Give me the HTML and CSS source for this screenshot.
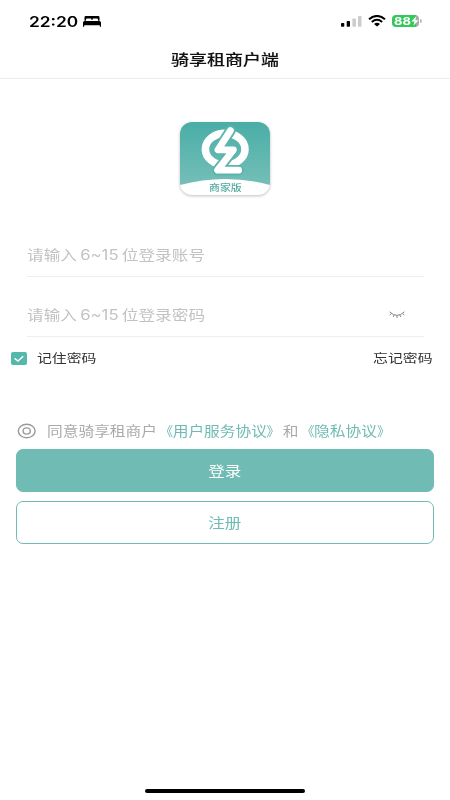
FILE: index.html
```html
<!DOCTYPE html>
<html lang="zh-CN">
<head>
<meta charset="utf-8">
<title>骑享租商户端</title>
<link rel="stylesheet" href="styles.css">
</head>
<body>
<div class="screen">
  <header class="status">
    <span class="wide time">22:20</span>
    <svg class="bed" width="18" height="11" viewBox="0 0 18 11"><path d="M1.5 4.7V1.2Q1.5 0 2.8 0H15.2Q16.5 0 16.5 1.2V4.7H15V3.4Q15 2.5 14 2.5H10.4Q9.5 2.5 9.5 3.4V4.1H8.5V3.4Q8.5 2.5 7.6 2.5H4Q3 2.5 3 3.4V4.7Z"/><path d="M0 10.7V6.6Q0 5 1.8 5H16.2Q18 5 18 6.6V10.7H16.8V9.3H1.2V10.7Z"/></svg>
    <svg class="signal" width="21" height="11" viewBox="0 0 21 11"><rect x="0" y="7" width="3.3" height="3.7" rx=".8"/><rect x="5.7" y="5" width="3.3" height="5.7" rx=".8"/><rect class="off" x="11.4" y="2.5" width="3.5" height="8.2" rx=".8"/><rect class="off" x="17" y="0" width="3.5" height="10.7" rx=".8"/></svg>
    <svg class="wifi" width="18" height="12" viewBox="0 0 18 12"><path d="M1 4.2Q9-2.3 17 4.2M3.8 6.9Q9 2.6 14.2 6.9" fill="none" stroke="#000" stroke-width="2"/><path d="M6 9Q9 6.6 12 9L9 11.6Z"/></svg>
    <div class="battery"><span class="wide level">88</span><svg width="8" height="10" viewBox="0 0 8 10"><path d="M5.2.2.4 5.5H3.4L2.4 9.8 7.5 4.2H4.5Z"/></svg></div>
    <i class="battery-tip"></i>
  </header>
  <h1 class="title"><span class="wide">骑享租商户端</span></h1>

  <div class="logo">
    <svg width="100" height="84" viewBox="0 0 100 84">
      <defs>
        <linearGradient id="g" x1="0" y1="0" x2="0" y2="1"><stop offset="0" stop-color="#49aea6"/><stop offset="1" stop-color="#74bfb8"/></linearGradient>
        <clipPath id="c"><rect x="5" y="4" width="90" height="73" rx="12"/></clipPath>
      </defs>
      <rect class="card" x="5" y="4" width="90" height="73" rx="12"/>
      <g clip-path="url(#c)"><path fill="url(#g)" d="M5 4H95V67Q50 55 5 67Z"/></g>
      <ellipse cx="50.2" cy="31.2" rx="19.8" ry="15.8" fill="none" stroke="#fff" stroke-width="7.6"/>
      <path d="M55.4 12.6 43 31.8H58.4L42.6 52.2H63.6" fill="none" stroke="#5bb5ad" stroke-width="10.6" stroke-linejoin="round" stroke-linecap="round"/>
      <path d="M55.4 12.6 43 31.8H58.4L42.6 52.2H63.6" fill="none" stroke="#fff" stroke-width="6.8" stroke-linejoin="round" stroke-linecap="round"/>
    </svg>
    <span class="wide edition">商家版</span>
  </div>

  <main>
    <div class="field account"><span class="wide">请输入 6~15 位登录账号</span></div>
    <div class="field password"><span class="wide">请输入 6~15 位登录密码</span>
      <svg width="16" height="8" viewBox="0 0 16 8"><path d="M.6.8Q8 8 15.4.8M2.6 2.4.7 4M5.2 4 4.2 6M8 4.4V7M10.8 4 11.8 6M13.4 2.4 15.3 4"/></svg>
    </div>
    <div class="options">
      <span class="check"><svg width="16" height="13" viewBox="0 0 16 13"><path d="M3.6 6.4 7 9 12.2 4.2"/></svg></span>
      <span class="wide">记住密码</span>
      <span class="wide forgot">忘记密码</span>
    </div>
    <div class="agree">
      <svg width="20" height="16" viewBox="0 0 20 16"><ellipse cx="9.7" cy="8" rx="8.4" ry="6.8"/><ellipse cx="9.7" cy="8" rx="3.6" ry="3.1"/></svg>
      <span class="wide">同意骑享租商户<a><b class="open">《</b>用户服务协议<b class="close">》</b></a>和<a><b class="open">《</b>隐私协议<b class="close">》</b></a></span>
    </div>
    <div class="button primary"><span class="wide">登录</span></div>
    <div class="button outline"><span class="wide">注册</span></div>
  </main>
  <div class="home"></div>
</div>
</body>
</html>
```
FILE: styles.css
```css
* { box-sizing: border-box; }
body {
  margin: 0;
  background: #fff;
  color: #333;
  font-family: Inter, "Noto Sans CJK SC", sans-serif;
}
.screen {
  width: 450px;
  height: 800px;
  display: flex;
  flex-direction: column;
  overflow: hidden;
}
/* Type is set 1.2 times as wide as it is tall. */
.wide {
  display: inline-block;
  white-space: nowrap;
  transform: scaleX(1.2);
  transform-origin: left center;
}
.status {
  height: 42px;
  display: flex;
  align-items: center;
  padding-left: 29px;
  color: #000;
}
.time { width: 54px; padding-top: 1px; font-size: 14.4px; font-weight: 600; line-height: 20px; }
.signal { margin-left: 240px; }
.signal .off { fill: #ccc; }
.wifi { margin-left: 6px; }
.battery {
  width: 27px;
  height: 12px;
  margin-left: 6px;
  padding-left: 2px;
  display: flex;
  align-items: center;
  border-radius: 4px;
  background: linear-gradient(90deg, #34c759 88%, #aaa 88%);
}
.level { width: 17px; padding-top: 1px; color: #fff; font-size: 10.8px; font-weight: 700; line-height: 12px; }
.battery svg { fill: #fff; }
.battery-tip { width: 2px; height: 4px; margin-left: 1px; border-radius: 0 2px 2px 0; background: #bbb; }
.title {
  height: 37px;
  margin: 0;
  border-bottom: 1px solid #ededed;
  color: #111;
  font-size: 15px;
  font-weight: 500;
  line-height: 35px;
  text-align: center;
  -webkit-text-stroke: .1px #111;
}
.title .wide, .button .wide { transform-origin: center; }
.logo {
  position: relative;
  width: 100px;
  height: 84px;
  margin: 39px 0 0 175px;
}
.logo svg { display: block; }
.card { fill: #fff; filter: drop-shadow(0 1px 1.5px rgba(0, 0, 0, .25)); }
.edition {
  position: absolute;
  left: 34px;
  top: 64px;
  color: #55aaa2;
  font-size: 9.1px;
  font-weight: 500;
  line-height: 12px;
}
.field {
  width: 397px;
  height: 60px;
  margin-left: 27px;
  display: flex;
  align-items: center;
  border-bottom: 1px solid #eee;
  color: #c2c2c2;
  font-size: 13.9px;
  word-spacing: -1.2px;
}
.account { margin-top: 15px; padding-top: 14px; }
.password { padding-top: 15px; justify-content: space-between; }
.password svg { margin: 1px 19px 0 0; fill: none; stroke: #888; stroke-width: 1; }
.options {
  height: 43px;
  padding: 0 17px 0 11px;
  display: flex;
  align-items: center;
  font-size: 12.4px;
}
.options .wide { margin-top: -2px; }
.check { width: 16px; height: 13px; margin-right: 10px; border-radius: 2px; background: #53b9ab; }
.check svg { display: block; fill: none; stroke: #fff; stroke-width: 1.4; }
.options .forgot { margin-left: auto; transform-origin: right center; }
.agree {
  height: 20px;
  margin: 41px 0 8px 17px;
  display: flex;
  align-items: center;
  color: #aaa;
  font-size: 13.1px;
}
.agree svg { margin: 0 10px 0 0; fill: none; stroke: #999; stroke-width: 1.4; }
.agree .wide { margin-top: -1px; }
.agree a { color: #6fbbb4; }
.agree b { display: inline-block; font-weight: 400; }
.open { transform: scaleX(.85); transform-origin: right center; }
.close { transform: scaleX(.85); transform-origin: left center; }
.button {
  width: 418px;
  height: 43px;
  margin: 0 16px 9px;
  padding-bottom: 1px;
  display: flex;
  align-items: center;
  justify-content: center;
  border: 1px solid #71bbb5;
  border-radius: 7px;
  font-size: 13.8px;
}
.primary { background: #71bbb5; color: #fff; }
.outline { color: #6fbbb4; }
.home { width: 160px; height: 4px; margin: auto auto 7px 145px; border-radius: 2px; background: #000; }
```
